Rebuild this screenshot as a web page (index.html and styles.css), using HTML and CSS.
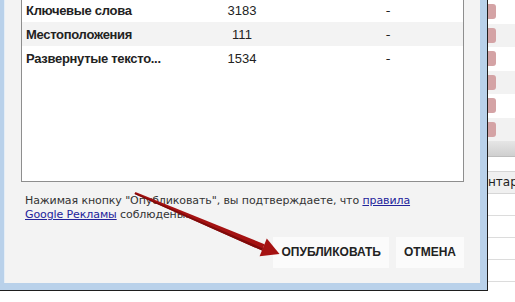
FILE: index.html
```html
<!DOCTYPE html>
<html>
	<head>
		<meta charset="UTF-8">
		<title>Публикация</title>
		<link rel="stylesheet" href="styles.css">
	</head>
	<body>
		<div class="screen">
			<div class="window">
				<div class="frame">
					<div class="dialog">
						<div class="table-box">
							<div class="row">
								<div class="name">Ключевые слова</div>
								<div class="num">3183</div>
								<div class="dash">-</div>
							</div>
							<div class="row odd">
								<div class="name">Местоположения</div>
								<div class="num">111</div>
								<div class="dash">-</div>
							</div>
							<div class="row">
								<div class="name">Развернутые тексто...</div>
								<div class="num">1534</div>
								<div class="dash">-</div>
							</div>
						</div>
						<p class="note">Нажимая кнопку "Опубликовать", вы подтверждаете, что <a href="#">правила</a> <a href="#">Google Рекламы</a> соблюдены.</p>
						<div class="btns">
							<div class="btn">ОПУБЛИКОВАТЬ</div>
							<div class="btn">ОТМЕНА</div>
						</div>
					</div>
				</div>
			</div>

			<div class="behind">
				<div class="list">
					<div class="item"><span class="tag"></span></div>
					<div class="item"><span class="tag"></span></div>
					<div class="item"><span class="tag"></span></div>
					<div class="item"><span class="tag"></span></div>
					<div class="item"><span class="tag"></span></div>
					<div class="item"><span class="tag"></span></div>
				</div>
				<div class="head-bar"></div>
				<div class="col-head">нтари</div>
				<div class="line"></div>
				<div class="line"></div>
				<div class="line"></div>
				<div class="line"></div>
			</div>

			<svg class="arrow" width="515" height="302" viewBox="0 0 515 302">
				<polygon points="135.4,192.1 264.5,244.2 262.1,250.6 134.6,193.9" fill="#a51212"/>
				<polygon points="279.5,254 266.8,238.6 259.6,256.2" fill="#a51212"/>
				<polygon points="262.1,250.6 134.6,193.9 135,193 263,248.4" fill="#7e0a0a"/>
			</svg>
		</div>
	</body>
</html>
```

FILE: styles.css
```css
html, body {
	margin: 0;
	padding: 0;
}
.screen {
	width: 515px;
	height: 302px;
	overflow: hidden;
	background: #fff;
	position: relative;
	display: flex;
	align-items: flex-start;
	font-family: "DejaVu Sans", Verdana, sans-serif;
	color: #222;
}
.window {
	width: 487px;
	height: 290px;
	border-right: 1px solid #1e1e1e;
	border-bottom: 1px solid #1e1e1e;
	flex-shrink: 0;
}
.frame {
	height: 100%;
	box-sizing: border-box;
	background: #b9d1ea;
	padding: 0 7px 7px 4px;
}
.dialog {
	height: 100%;
	box-sizing: border-box;
	background: #f3f3f3;
	border-left: 1px solid #e4edf6;
	padding: 0 16px;
	display: flex;
	flex-direction: column;
}
.table-box {
	margin-top: -4px;
	height: 186px;
	box-sizing: border-box;
	border: 1px solid #8e8e8e;
	background: #fff;
	padding-top: 1px;
}
.row {
	display: grid;
	grid-template-columns: 178px 84px 1fr;
	height: 24px;
	line-height: 25px;
	font-size: 13px;
}
.row.odd {
	background: #f3f3f3;
}
.name {
	font-family: "Liberation Sans", Arial, sans-serif;
	font-weight: bold;
	letter-spacing: -0.3px;
	padding-left: 4px;
	white-space: nowrap;
}
.num {
	font-family: "Liberation Sans", Arial, sans-serif;
	text-align: center;
}
.dash {
	text-align: center;
	padding-left: 29px;
}
.note {
	margin: 12px 0 0 4px;
	max-width: 400px;
	font-size: 11px;
	letter-spacing: -0.1px;
	line-height: 14px;
	color: #333;
}
.note a {
	color: #23239b;
}
.btns {
	display: flex;
	justify-content: flex-end;
	gap: 7px;
	margin-top: 15px;
}
.btn {
	background: #fbfbfb;
	height: 31px;
	line-height: 31px;
	padding: 0 8px;
	font-family: "Liberation Sans", Arial, sans-serif;
	font-size: 12px;
	font-weight: bold;
	color: #222;
}
.behind {
	flex: 1;
	height: 302px;
	overflow: hidden;
	font-family: "DejaVu Sans", Verdana, sans-serif;
}
.item {
	height: 23.5px;
	display: flex;
	align-items: center;
}
.item:nth-child(even) {
	background: #f2f2f2;
}
.tag {
	width: 8px;
	height: 15px;
	background: #d4a3a5;
	border-radius: 0 3px 3px 0;
}
.head-bar {
	height: 15px;
	background: linear-gradient(#e6e6e6, #cfcfcf);
	border-bottom: 1px solid #bdbdbd;
}
.col-head {
	margin-top: 14px;
	height: 21px;
	line-height: 21px;
	font-size: 12px;
	background: #f0f0f0;
	border-top: 1px solid #d6d6d6;
	border-bottom: 1px solid #d6d6d6;
	white-space: nowrap;
	overflow: hidden;
}
.line {
	height: 21px;
	border-bottom: 1px solid #dcdcdc;
}
.arrow {
	position: absolute;
	left: 0;
	top: 0;
	pointer-events: none;
}
```
